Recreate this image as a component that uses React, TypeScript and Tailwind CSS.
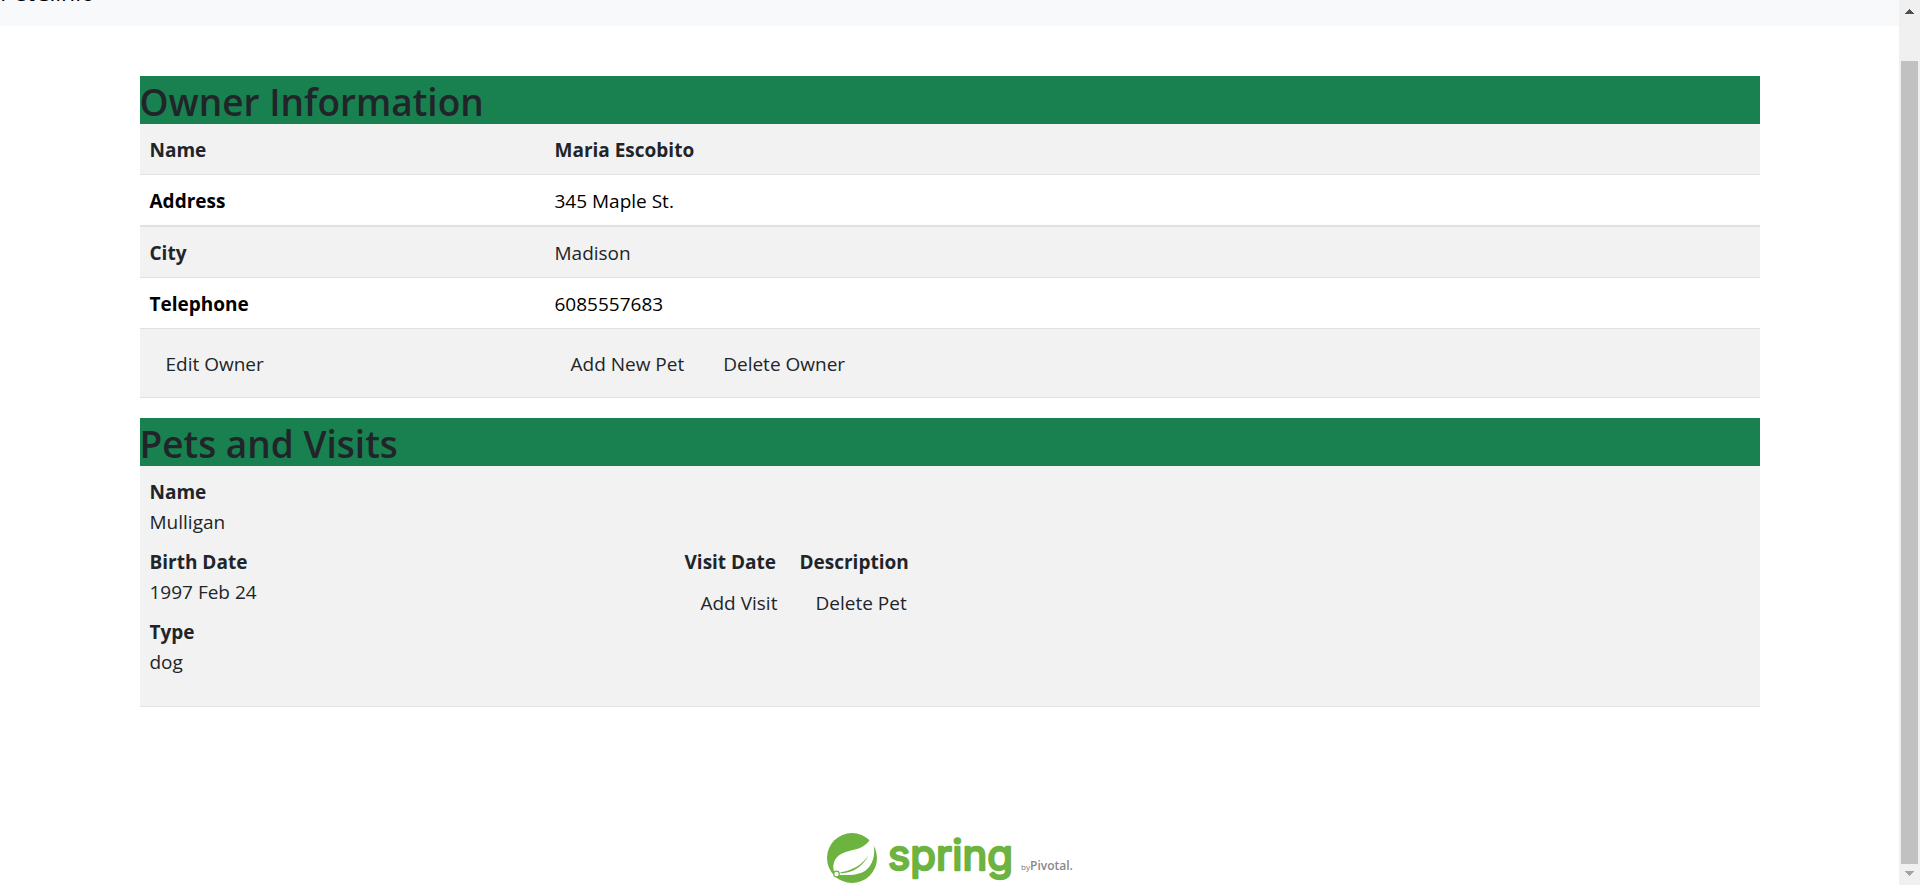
import React from "react";

type OwnerRow = { label: string; value: string; strong?: boolean; rowClass: string };

const rows: OwnerRow[] = [
  { label: "Name", value: "Maria Escobito", strong: true, rowClass: "border-b border-[#dee2e6] bg-[#f2f2f2]" },
  { label: "Address", value: "345 Maple St.", rowClass: "border-b-2 border-[#dee2e6] text-black" },
  { label: "City", value: "Madison", rowClass: "border-b border-[#dee2e6] bg-[#f2f2f2]" },
  { label: "Telephone", value: "6085557683", rowClass: "border-b border-[#dee2e6] text-black" },
];

const pet = [
  { label: "Name", value: "Mulligan" },
  { label: "Birth Date", value: "1997 Feb 24" },
  { label: "Type", value: "dog" },
];

function SectionTitle({ children }: { children: React.ReactNode }) {
  return <h2 className="bg-[#198050] pt-1 text-[37px] leading-[44px] font-semibold">{children}</h2>;
}

function Action({ children }: { children: React.ReactNode }) {
  return (
    <a href="#" className="inline-block h-12 px-4 leading-[48px] whitespace-nowrap">
      {children}
    </a>
  );
}

function SpringLogo() {
  return (
    <svg viewBox="0 0 248 52" className="h-[52px] w-[248px] overflow-visible" role="img" aria-label="spring by Pivotal">
      <circle cx="26" cy="26" r="25" fill="#6db33f" />
      <path d="M45.500 4.500C42 12 37 15.500 29 17.500C20 19.500 12 22 9 28C6.500 33 7 37.500 9 41C11 43.500 14 43 18 43C28 43.500 38 42 43.500 34.500C50 25.500 49 15 45.500 4.500Z" fill="#fff" />
      <path d="M42.500 23.500C36 33 27 38 14 40.500L15 41.500C28 40.500 37 34 42.500 23.500Z" fill="#6db33f" />
      <circle cx="10.500" cy="42" r="3.400" fill="#6db33f" />
      <circle cx="10.500" cy="42" r="2.200" fill="#fff" />
      <text x="62" y="38" fontFamily="Inter, sans-serif" fontSize="42" fontWeight="400" fill="#6db33f" stroke="#6db33f" strokeWidth="2.4" strokeLinejoin="round">spring</text>
      <text x="195" y="38" fontFamily="Open Sans, sans-serif" fontSize="8" fill="#777">by</text>
      <text x="204" y="38" fontFamily="Open Sans, sans-serif" fontSize="12" fontWeight="600" fill="#888">Pivotal.</text>
    </svg>
  );
}

function ScrollBar() {
  return (
    <div aria-hidden="true" className="flex w-[21px] shrink-0 flex-col items-center bg-[#f0f0f0] pr-px">
      <div className="h-[61px] pt-[9px]">
        <svg className="block" width="9" height="5" viewBox="0 0 9 5"><path d="M4 0h1v1h1v1h1v1h1v1h1v1H0V4h1V3h1V2h1V1h1z" fill="#505050" /></svg>
      </div>
      <div className="w-[17px] flex-1 bg-[#c1c1c1]" />
      <div className="h-[21px] pt-[7px]">
        <svg className="block" width="9" height="5" viewBox="0 0 9 5"><path d="M0 0h9v1H8v1H7v1H6v1H5v1H4V4H3V3H2V2H1V1H0z" fill="#a3a3a3" /></svg>
      </div>
    </div>
  );
}

export default function App() {
  return (
    <div className="flex h-screen bg-white font-['Open_Sans',sans-serif] text-[19px] leading-[30px] text-[#212529]">
      <div className="flex min-w-0 flex-1 flex-col overflow-hidden">
        <header className="flex h-[26px] shrink-0 items-end overflow-hidden bg-[#f8f9fa]">
          <a href="#" className="pb-[19px] text-[23px] text-black">PetClinic</a>
        </header>
        <main className="mx-auto w-full max-w-[1620px] pt-[50px]">
          <SectionTitle>Owner Information</SectionTitle>
          <table className="mb-5 w-full table-fixed border-separate border-spacing-0 text-left">
            <colgroup>
              <col className="w-1/4" />
              <col />
            </colgroup>
            <tbody>
              {rows.map((r) => (
                <tr key={r.label} className={r.rowClass}>
                  <th className="border-inherit px-2.5 pt-[11px] pb-[9px] font-bold [border-bottom-width:inherit]">{r.label}</th>
                  <td className={r.strong ? "border-inherit px-2.5 pt-[11px] pb-[9px] font-bold [border-bottom-width:inherit]" : "border-inherit px-2.5 pt-[11px] pb-[9px] [border-bottom-width:inherit]"}>{r.value}</td>
                </tr>
              ))}
              <tr className="bg-[#f2f2f2]">
                <td className="border-b border-[#dee2e6] px-2.5 pt-[11px] pb-[9px]"><Action>Edit Owner</Action></td>
                <td className="border-b border-[#dee2e6] px-2.5 pt-[11px] pb-[9px]">
                  <div className="flex gap-[7px]">
                    <Action>Add New Pet</Action>
                    <Action>Delete Owner</Action>
                  </div>
                </td>
              </tr>
            </tbody>
          </table>
          <SectionTitle>Pets and Visits</SectionTitle>
          <table className="w-full table-fixed border-separate border-spacing-0 text-left">
            <colgroup>
              <col className="w-1/3" />
              <col />
            </colgroup>
            <tbody>
              <tr className="bg-[#f2f2f2]">
                <td className="border-b border-[#dee2e6] px-2.5 pt-[11px] pb-[19px]">
                  <dl>
                    {pet.map((p) => (
                      <div key={p.label} className="mb-2.5">
                        <dt className="font-bold">{p.label}</dt>
                        <dd>{p.value}</dd>
                      </div>
                    ))}
                  </dl>
                </td>
                <td className="border-b border-[#dee2e6] px-[5px] pt-0.5 align-middle">
                  <table>
                    <thead>
                      <tr>
                        <th className="w-[115px] font-bold">Visit Date</th>
                        <th className="font-bold">Description</th>
                      </tr>
                    </thead>
                    <tbody>
                      <tr>
                        <td className="pt-0.5"><Action>Add Visit</Action></td>
                        <td className="pt-0.5"><Action>Delete Pet</Action></td>
                      </tr>
                    </tbody>
                  </table>
                </td>
              </tr>
            </tbody>
          </table>
        </main>
        <footer className="mt-[125px] flex shrink-0 justify-center">
          <SpringLogo />
        </footer>
      </div>
      <ScrollBar />
    </div>
  );
}
